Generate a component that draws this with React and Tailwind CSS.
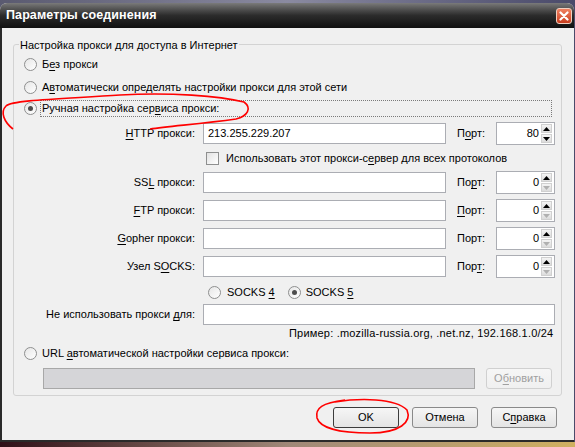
// Connection settings dialog (XP-style, dark title bar)

const font = { fontFamily: '"Liberation Sans", Arial, sans-serif' };

function U({ children }) {
    return <span className="underline underline-offset-[2px]">{children}</span>;
}

function Radio({ checked = false }) {
    return (
        <span className="relative flex h-[13px] w-[13px] flex-shrink-0 items-center justify-center rounded-full border border-[#8e8f8f] bg-gradient-to-br from-[#e6e6e6] to-[#ffffff]">
            {checked && <span className="h-[5px] w-[5px] rounded-full bg-[#4d4d4d]" />}
        </span>
    );
}

function Checkbox() {
    return <span className="h-[13px] w-[13px] flex-shrink-0 border border-[#8e8f8f] bg-gradient-to-br from-[#e2e2e2] to-[#ffffff]" />;
}

function Spinner({ downDisabled }) {
    return (
        <div className="flex h-full w-[11px] flex-col justify-center gap-[1px] py-[1px]">
            <div className="flex h-[9px] items-center justify-center bg-gradient-to-b from-[#f4f4f4] to-[#dcdcdc] border border-[#d0d0d0]">
                <svg width="7" height="4" viewBox="0 0 7 4"><path d="M0 4 L3.5 0 L7 4 Z" fill="#000" /></svg>
            </div>
            <div className="flex h-[9px] items-center justify-center bg-gradient-to-b from-[#f4f4f4] to-[#dcdcdc] border border-[#d0d0d0]">
                <svg width="7" height="4" viewBox="0 0 7 4"><path d="M0 0 L3.5 4 L7 0 Z" fill={downDisabled ? '#b0b0b0' : '#000'} /></svg>
            </div>
        </div>
    );
}

function ProxyRow({ label, value = '', port, portLabel, className = '' }) {
    return (
        <div className={`flex h-[23px] items-center ${className}`}>
            <div className="w-[181px] text-right">{label}</div>
            <div className="ml-[8px] flex h-[21px] w-[243px] items-center border border-[#abadb3] bg-white pl-[4px]">{value}</div>
            <div className="ml-[11px] w-[39px]">{portLabel}</div>
            <div className="flex h-[23px] w-[59px] items-center justify-end border border-[#abadb3] bg-white pr-[2px]">
                <span className="mr-[2px]">{port}</span>
                <Spinner downDisabled={port === '0'} />
            </div>
        </div>
    );
}

function Button({ children, primary, disabled }) {
    return (
        <div
            className={`flex h-[21px] w-[66px] items-center justify-center rounded-[3px] border bg-gradient-to-b ${
                primary
                    ? 'border-[#3c3c3c] from-[#f6f6f6] to-[#e4e4e4]'
                    : disabled
                    ? 'border-[#d0d0d0] from-[#f6f6f6] to-[#f0f0f0] text-[#a0a0a0]'
                    : 'border-[#8a8a8a] from-[#f6f6f6] to-[#e4e4e4]'
            }`}
        >
            {children}
        </div>
    );
}

export default function App() {
    return (
        <div className="relative h-[447px] w-[575px] overflow-hidden bg-gradient-to-r from-[#5a5a70] via-[#8a8aa0] to-[#4a4a6a]" style={font}>
            {/* Window */}
            <div className="relative mt-[3px] flex h-[439px] w-[574px] flex-col overflow-hidden rounded-t-[7px] bg-[#f0f0f0] text-[11px] text-black">
                {/* Title bar */}
                <div className="flex h-[25px] flex-shrink-0 items-center justify-between bg-gradient-to-b from-[#7a7a7a] via-[#2c2c2c] to-[#111111] pl-[6px] pr-[2px]">
                    <span className="text-[12.5px] font-bold tracking-[0.1px] text-white">Параметры соединения</span>
                    <div className="flex h-[16px] w-[16px] items-center justify-center rounded-[3px] border border-[#f0d0c0] bg-gradient-to-b from-[#f08060] to-[#c83c1c]">
                        <svg width="10" height="10" viewBox="0 0 10 10">
                            <path d="M1.5 1.5 L8.5 8.5 M8.5 1.5 L1.5 8.5" stroke="#fff" strokeWidth="2.2" strokeLinecap="round" />
                        </svg>
                    </div>
                </div>

                {/* Body */}
                <div className="flex flex-1 flex-col border-b-2 border-l-2 border-[#2a2a2a] pl-[11px] pt-[16px]">
                    {/* Group box */}
                    <div className="relative flex h-[352px] w-[549px] flex-col rounded-[3px] border border-[#d3d3d3] pt-[9px]">
                        <span className="absolute -top-[8px] left-[5px] bg-[#f0f0f0] px-[1px]">Настройка прокси для доступа в Интернет</span>

                        <div className="flex h-[20px] items-center gap-[5px] pl-[10px]">
                            <Radio />
                            <span>Б<U>е</U>з прокси</span>
                        </div>
                        <div className="mt-[3px] flex h-[20px] items-center gap-[5px] pl-[10px]">
                            <Radio />
                            <span>А<U>в</U>томатически определять настройки прокси для этой сети</span>
                        </div>
                        <div className="mt-[2px] flex h-[18px] items-center gap-[3px] pl-[10px] pr-[9px]">
                            <Radio checked />
                            <span className="flex h-[17px] flex-1 items-center border border-dotted border-[#7a7a7a] pl-[1px]">Ручная настройка сер<U>в</U>иса прокси:</span>
                        </div>

                        <ProxyRow className="mt-[5px]" label={<><U>H</U>TTP прокси:</>} value="213.255.229.207" portLabel={<>П<U>о</U>рт:</>} port="80" />

                        <div className="mt-[5px] flex h-[16px] items-center gap-[7px] pl-[192px]">
                            <Checkbox />
                            <span>Использовать этот прокси-с<U>е</U>рвер для всех протоколов</span>
                        </div>

                        <ProxyRow className="mt-[5px]" label={<>SS<U>L</U> прокси:</>} portLabel={<>По<U>р</U>т:</>} port="0" />
                        <ProxyRow className="mt-[5px]" label={<><U>F</U>TP прокси:</>} portLabel={<><U>П</U>орт:</>} port="0" />
                        <ProxyRow className="mt-[5px]" label={<><U>G</U>opher прокси:</>} portLabel="Порт:" port="0" />
                        <ProxyRow className="mt-[5px]" label={<>Узел S<U>O</U>CKS:</>} portLabel={<>Пор<U>т</U>:</>} port="0" />

                        <div className="mt-[5px] flex h-[18px] items-center pl-[194px]">
                            <Radio />
                            <span className="ml-[6px]">SOCKS <U>4</U></span>
                            <span className="ml-[13px]"><Radio checked /></span>
                            <span className="ml-[5px]">SOCKS <U>5</U></span>
                        </div>

                        <div className="mt-[3px] flex h-[21px] items-center">
                            <div className="w-[181px] text-right">Не использовать прокси <U>д</U>ля:</div>
                            <div className="ml-[8px] h-[21px] w-[352px] border border-[#abadb3] bg-white" />
                        </div>

                        <div className="mt-[1px] flex h-[14px] items-center pl-[275px] tracking-[0.2px]">Пример: .mozilla-russia.org, .net.nz, 192.168.1.0/24</div>

                        <div className="mt-[4px] flex h-[18px] items-center gap-[5px] pl-[10px]">
                            <Radio />
                            <span>URL <U>а</U>втоматической настройки сервиса прокси:</span>
                        </div>

                        <div className="mt-[5px] flex h-[22px] items-center pl-[29px]">
                            <div className="h-[21px] w-[432px] border border-[#a8a8a8] bg-[#d5d5d8]" />
                            <div className="ml-[11px]">
                                <Button disabled>О<U>б</U>новить</Button>
                            </div>
                        </div>
                    </div>

                    {/* Dialog buttons */}
                    <div className="mt-[11px] flex gap-[13px] pl-[320px]">
                        <Button primary>OK</Button>
                        <Button>Отмена</Button>
                        <Button>С<U>п</U>равка</Button>
                    </div>
                </div>
            </div>

            {/* Desktop strip below the window */}
            <div className="h-[5px] w-full bg-gradient-to-r from-[#301018] via-[#a08878] to-[#d0b060]" />

            {/* Hand-drawn red marks */}
            <svg className="pointer-events-none absolute left-0 top-0" width="575" height="447">
                <path
                    d="M13 129 C4 122, 0 112, 6 106 C12 100, 60 99, 120 95 C170 92, 220 96, 244 102 C252 108, 248 116, 236 119 C200 124, 170 126, 150 129"
                    fill="none"
                    stroke="#ff0000"
                    strokeWidth="1.6"
                />
                <path
                    d="M335 402 C360 398, 395 398, 407 410 C412 422, 400 433, 370 433 C340 433, 320 428, 317 418 C315 408, 322 403, 345 400"
                    fill="none"
                    stroke="#ff0000"
                    strokeWidth="1.6"
                />
            </svg>
        </div>
    );
}
